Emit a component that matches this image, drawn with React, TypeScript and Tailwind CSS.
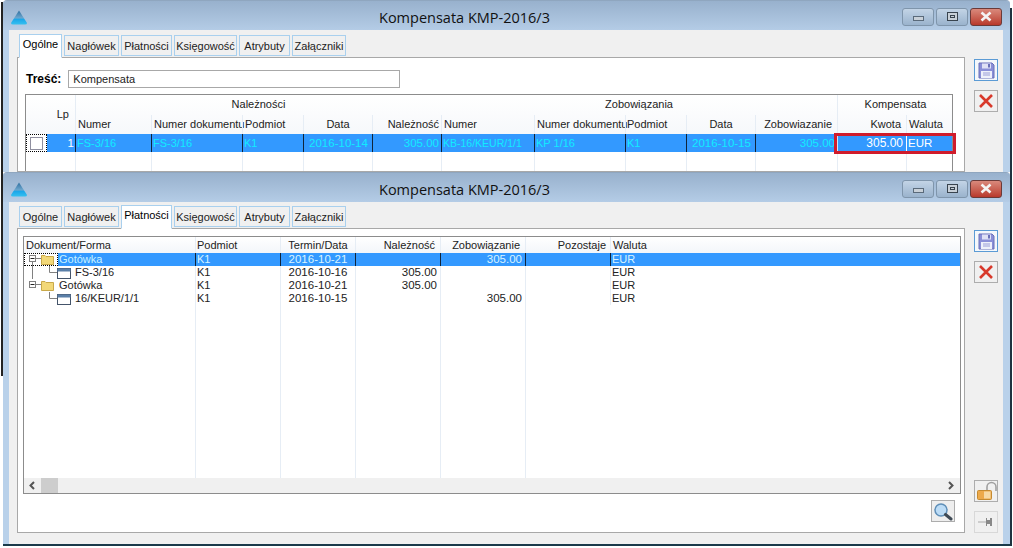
import React from "react";

const FONT = "font-['Liberation_Sans',Arial,sans-serif]";
const TITLE = "font-['Open_Sans','Noto_Sans',sans-serif]";

function Logo() {
  return (
    <svg width="16" height="15" viewBox="0 0 16 15" className="shrink-0 mt-[3px]">
      <defs>
        <linearGradient id="lg" x1="0" y1="0" x2="0" y2="1">
          <stop offset="0" stopColor="#2f6f9f" />
          <stop offset="0.55" stopColor="#6fa8cf" />
          <stop offset="0.6" stopColor="#19a4e8" />
          <stop offset="1" stopColor="#35c0f0" />
        </linearGradient>
      </defs>
      <path d="M8 0.5 L16 13 Q16 14.5 14 14.5 L2 14.5 Q0 14.5 0 13 Z" fill="url(#lg)" />
    </svg>
  );
}

function Chrome() {
  return (
    <div className="flex items-start gap-[2px] mt-[2px]">
      <div className="w-[32px] h-[18px] rounded-[3px] border border-[#7f95ab] bg-gradient-to-b from-[#c3d4e6] to-[#9ab3cd] flex items-center justify-center">
        <div className="w-[11px] h-[5px] mt-[3px] border border-[#5a6a7a] bg-[#c8d0d8]" />
      </div>
      <div className="w-[32px] h-[18px] rounded-[3px] border border-[#7f95ab] bg-gradient-to-b from-[#c3d4e6] to-[#9ab3cd] flex items-center justify-center">
        <div className="w-[11px] h-[9px] border border-[#39444f] bg-[#c8d0d8] flex items-center justify-center">
          <div className="w-[5px] h-[3px] border border-[#39444f]" />
        </div>
      </div>
      <div className="w-[32px] h-[18px] rounded-[3px] border border-[#6b3a38] bg-gradient-to-b from-[#d9897c] to-[#b8382c] flex items-center justify-center">
        <svg width="14" height="11" viewBox="0 0 14 11">
          <path d="M2.5 1.5 L11.5 9.5 M11.5 1.5 L2.5 9.5" stroke="#f4f4f4" strokeWidth="2.6" />
        </svg>
      </div>
    </div>
  );
}

function Tabs({ active }: { active: string }) {
  const tabs: [string, string][] = [
    ["Ogólne", "w-[43px]"],
    ["Nagłówek", "w-[55px]"],
    ["Płatności", "w-[51px]"],
    ["Księgowość", "w-[63px]"],
    ["Atrybuty", "w-[51px]"],
    ["Załączniki", "w-[54px]"],
  ];
  return (
    <div className="flex items-end gap-[2px] pl-[10px] h-[25px] relative z-10">
      {tabs.map(([t, w]) =>
        t === active ? (
          <div key={t} className={`${w} h-[24px] -mb-[1px] border border-[#a9d0ee] border-b-white bg-white text-black text-[11px] leading-[19px] text-center whitespace-nowrap`}>
            {t}
          </div>
        ) : (
          <div key={t} className={`${w} h-[21px] mb-[1px] border border-[#a9d0ee] bg-[#f0f0f0] text-[#222] text-[11px] leading-[20px] text-center whitespace-nowrap`}>
            {t}
          </div>
        )
      )}
    </div>
  );
}

function Save() {
  return (
    <div className="w-[24px] h-[22px] border border-[#5b9bd5] bg-[#f4f8fc] flex items-center justify-center">
      <svg width="17" height="17" viewBox="0 0 17 17">
        <path d="M1 1 H14 L16 3 V16 H1 Z" fill="#8a8fd8" stroke="#6a70b8" />
        <rect x="4" y="1.5" width="9" height="5" fill="#dfe1f5" />
        <rect x="10" y="2" width="2" height="3.5" fill="#6a70b8" />
        <rect x="3" y="9" width="11" height="7" fill="#eef0fa" />
        <path d="M5 11 H12 M5 13 H12" stroke="#9a9ed8" />
      </svg>
    </div>
  );
}

function Cancel() {
  return (
    <div className="w-[24px] h-[22px] border border-[#adadad] bg-[#f0f0f0] flex items-center justify-center">
      <svg width="16" height="16" viewBox="0 0 16 16">
        <path d="M2 2 L14 14 M14 2 L2 14" stroke="#d8392b" strokeWidth="2.6" />
      </svg>
    </div>
  );
}

function Window({ title, children, className }: { title: string; children: React.ReactNode; className: string }) {
  return (
    <div className={`${className} flex flex-col ml-[3px] mr-[3px] bg-[#b9d1ea] overflow-hidden rounded-t-[4px] border-t border-[#8fa6bf]`}>
      <div className="h-[29px] shrink-0 flex items-center bg-gradient-to-b from-[#98b1cd] to-[#b4cce6] pl-[8px] pr-[8px]">
        <Logo />
        <div className={`flex-1 text-center text-[14.5px] pt-[5px] text-[#111] ${TITLE}`}>{title}</div>
        <Chrome />
      </div>
      <div className="flex-1 min-h-0 ml-[6px] mr-[7px] bg-[#f0f0f0] flex flex-col">{children}</div>
    </div>
  );
}

const W1 = ["w-[49px]", "w-[76px]", "w-[91px]", "w-[61px]", "w-[69px]", "w-[69px]", "w-[93px]", "w-[91px]", "w-[61px]", "w-[69px]", "w-[82px]", "w-[69px]", "w-[47px]"];

function Row1() {
  const cells: [string, string][] = [
    ["FS-3/16", "text-left text-[11px]"],
    ["FS-3/16", "text-left text-[11px]"],
    ["K1", "text-left text-[11px]"],
    ["2016-10-14", "text-center text-[11.5px]"],
    ["305.00", "text-right pr-[2px] text-[11.5px]"],
    ["KB-16/KEUR/1/1", "text-left text-[10.5px]"],
    ["KP 1/16", "text-left text-[11px]"],
    ["K1", "text-left text-[11px]"],
    ["2016-10-15", "text-center text-[11.5px]"],
    ["305.00", "text-right pr-[2px] text-[11.5px]"],
  ];
  return (
    <div className="flex h-[18px] bg-[#3399ff] relative leading-[18px]">
      <div className={`${W1[0]} flex shrink-0`}>
        <div className="w-[21px] h-[18px] bg-white border border-dotted border-black flex items-center justify-center">
          <div className="w-[13px] h-[13px] border border-[#8f8f9f] bg-white" />
        </div>
        <div className="flex-1 pr-[1px] text-right text-white text-[11.5px]">1</div>
      </div>
      {cells.map(([t, align], i) => (
        <div key={i} className={`${W1[i + 1]} shrink-0 border-l border-[#10243a] pl-[1px] whitespace-nowrap text-[#10ecff] ${align}`}>
          {t}
        </div>
      ))}
      <div className={`${W1[11]} shrink-0 border-l border-[#cfe3f7] pr-[3px] text-right text-white text-[12px]`}>305.00</div>
      <div className={`${W1[12]} shrink-0 border-l border-white pl-[1px] text-white text-[11.5px]`}>EUR</div>
      <div className="absolute left-[808px] top-[-1px] w-[122px] h-[21px] border-[3px] border-[#d01c2c]" />
    </div>
  );
}

function Grid1() {
  const h2: [string, string][] = [
    ["Numer", "text-left pl-[2px]"],
    ["Numer dokumentu", "text-left pl-[2px]"],
    ["Podmiot", "text-left pl-[2px]"],
    ["Data", "text-center"],
    ["Należność", "text-right pr-[2px]"],
    ["Numer", "text-left pl-[2px]"],
    ["Numer dokumentu", "text-left pl-[2px]"],
    ["Podmiot", "text-left pl-[1px]"],
    ["Data", "text-center"],
    ["Zobowiazanie", "text-right pr-[5px]"],
    ["Kwota", "text-right pr-[5px]"],
    ["Waluta", "text-left pl-[2px]"],
  ];
  return (
    <div className="ml-[7px] mt-[6px] w-[928px] border-t border-l border-r border-[#8c8c8c] bg-white flex flex-col text-[11px] text-[#222] h-[100px] shrink-0">
      <div className="flex h-[39px] bg-gradient-to-b from-white to-[#f6f8fb]">
        <div className={`${W1[0]} shrink-0 text-right pr-[6px] pt-[11px]`}>Lp</div>
        <div className="flex-1 flex flex-col">
          <div className="flex h-[20px] leading-[19px] text-center">
            <div className="w-[366px] border-l border-[#e6edf5]">Należności</div>
            <div className="w-[396px]">Zobowiązania</div>
            <div className="w-[116px] border-l border-[#e6edf5]">Kompensata</div>
          </div>
          <div className="flex h-[19px] leading-[18px]">
            {h2.map(([t, a], i) => (
              <div key={i} className={`${W1[i + 1]} shrink-0 border-l border-[#e6edf5] whitespace-nowrap ${a}`}>
                {t}
              </div>
            ))}
          </div>
        </div>
      </div>
      <Row1 />
      <div className="flex flex-1">
        <div className={`${W1[0]} shrink-0`} />
        {W1.slice(1).map((w, i) => (
          <div key={i} className={`${w} shrink-0 border-l border-[#e6edf5]`} />
        ))}
      </div>
    </div>
  );
}

const W2 = ["w-[171px]", "w-[85px]", "w-[75px]", "w-[85px]", "w-[85px]", "w-[85px]", "flex-1"];

function Expander({ line, sel }: { line: boolean; sel?: boolean }) {
  return (
    <svg width="34" height="13" viewBox="0 0 34 13" className={`shrink-0 ${sel ? "bg-white outline-1 outline-dotted outline-offset-[-1px] outline-black" : ""}`}>
      {line && <path d="M8.5 9 V13" stroke="#808080" fill="none" />}
      <rect x="5.5" y="2.5" width="6" height="6" fill="#fff" stroke="#808080" />
      <path d="M6.5 5.5 H10.5" stroke="#222" fill="none" />
      <path d="M12 5.5 H17" stroke="#808080" fill="none" />
      <path d="M17.5 2.5 H21 L22 3.5 H29.5 V11.5 H17.5 Z" fill="#f2d878" stroke="#c9a94a" />
    </svg>
  );
}

function DocIcon({ line }: { line: boolean }) {
  return (
    <svg width="50" height="13" viewBox="0 0 50 13" className="shrink-0">
      {line && <path d="M8.5 0 V13" stroke="#808080" fill="none" />}
      <path d="M25.5 0 V6.5 H33" stroke="#808080" fill="none" />
      <rect x="33.5" y="2.5" width="13" height="10" fill="#fff" stroke="#44546a" />
      <rect x="33.5" y="2.5" width="13" height="3" fill="#5a7fa8" />
    </svg>
  );
}

function TreeRow({ name, doc, line, term, nal, zob, sel }: { name: string; doc: boolean; line: boolean; term: string; nal: string; zob: string; sel?: boolean }) {
  const c = sel ? "border-[#10243a] text-[#d8f4ff]" : "border-[#e6edf5] text-[#222]";
  return (
    <div className={`flex h-[13px] leading-[13px] text-[11px] ${sel ? "bg-[#3399ff]" : ""}`}>
      <div className={`${W2[0]} shrink-0 flex whitespace-nowrap ${sel ? "" : "text-[#222]"}`}>
        {doc ? <DocIcon line={line} /> : <Expander line={line} sel={sel} />}
        <span className={`pl-[1px] ${sel ? "text-[#c8f2ff]" : ""}`}>{name}</span>
      </div>
      <div className={`${W2[1]} shrink-0 pl-[1px] border-l ${c}`}>K1</div>
      <div className={`${W2[2]} shrink-0 text-center text-[11.5px] border-l ${c}`}>{term}</div>
      <div className={`${W2[3]} shrink-0 text-right pr-[3px] text-[11.5px] border-l ${c}`}>{nal}</div>
      <div className={`${W2[4]} shrink-0 text-right pr-[3px] text-[11.5px] border-l ${c}`}>{zob}</div>
      <div className={`${W2[5]} shrink-0 border-l ${c}`} />
      <div className={`${W2[6]} pl-[1px] border-l ${c}`}>EUR</div>
    </div>
  );
}

function Tree() {
  const h: [string, string][] = [
    ["Dokument/Forma", "text-left pl-[2px]"],
    ["Podmiot", "text-left pl-[1px]"],
    ["Termin/Data", "text-center"],
    ["Należność", "text-right pr-[5px]"],
    ["Zobowiązanie", "text-right pr-[5px]"],
    ["Pozostaje", "text-right pr-[4px]"],
    ["Waluta", "text-left pl-[2px]"],
  ];
  return (
    <div className="ml-[5px] mt-[7px] w-[938px] h-[258px] border border-[#8c8c8c] bg-white flex flex-col shrink-0">
      <div className="flex h-[16px] shrink-0 bg-gradient-to-b from-white to-[#f3f6fa] text-[11px] leading-[17px] text-[#222]">
        {h.map(([t, a], i) => (
          <div key={i} className={`${W2[i]} ${i < 6 ? "shrink-0" : ""} ${i > 0 ? "border-l border-[#e6edf5]" : ""} ${a}`}>
            {t}
          </div>
        ))}
      </div>
      <TreeRow name="Gotówka" doc={false} line={true} term="2016-10-21" nal="" zob="305.00" sel />
      <TreeRow name="FS-3/16" doc={true} line={true} term="2016-10-16" nal="305.00" zob="" />
      <TreeRow name="Gotówka" doc={false} line={false} term="2016-10-21" nal="305.00" zob="" />
      <TreeRow name="16/KEUR/1/1" doc={true} line={false} term="2016-10-15" nal="" zob="305.00" />
      <div className="flex-1 flex">
        {W2.map((w, i) => (
          <div key={i} className={`${w} ${i < 6 ? "shrink-0" : ""} ${i > 0 && i < 6 ? "border-l border-[#e6edf5]" : ""}`} />
        ))}
      </div>
      <div className="h-[15px] shrink-0 bg-[#f0f0f0] flex items-center justify-between">
        <div className="flex items-center">
          <svg width="17" height="15" viewBox="0 0 17 15">
            <path d="M10 4 L6.5 7.5 L10 11" fill="none" stroke="#555" strokeWidth="2" />
          </svg>
          <div className="w-[17px] h-[15px] bg-[#cdcdcd]" />
        </div>
        <svg width="17" height="15" viewBox="0 0 17 15" className="mr-[1px]">
          <path d="M7 4 L10.5 7.5 L7 11" fill="none" stroke="#555" strokeWidth="2" />
        </svg>
      </div>
    </div>
  );
}

function Lock() {
  return (
    <div className="w-[24px] h-[22px] border border-[#adadad] bg-[#f0f0f0] flex items-center justify-center">
      <svg width="21" height="20" viewBox="0 0 21 20">
        <path d="M11 10 V6 A4.5 4.5 0 0 1 20 6 V10" fill="none" stroke="#a0a0a0" strokeWidth="1.6" />
        <rect x="1.5" y="9.5" width="14" height="9" rx="1" fill="#eda94a" stroke="#c58a30" />
        <rect x="8" y="10.5" width="6.5" height="7" fill="#f7d9a4" />
      </svg>
    </div>
  );
}

function Pin() {
  return (
    <div className="w-[24px] h-[22px] border border-[#d8d8d8] bg-[#f0f0f0] flex items-center justify-center">
      <svg width="18" height="12" viewBox="0 0 18 12">
        <path d="M1 6 H9" stroke="#aaa" fill="none" />
        <path d="M9 2 H10 V4 H13 V2 H15 V10 H13 V8 H10 V10 H9 Z" fill="#888" />
      </svg>
    </div>
  );
}

function Search() {
  return (
    <div className="w-[24px] h-[22px] border border-[#adadad] bg-[#eee] flex items-center justify-center">
      <svg width="20" height="19" viewBox="0 0 20 19">
        <circle cx="8" cy="8" r="6" fill="#bcdcf6" stroke="#5f8fb8" strokeWidth="1.5" />
        <path d="M12.5 12.5 L18 17" stroke="#3f4a55" strokeWidth="3" strokeLinecap="round" />
      </svg>
    </div>
  );
}

export default function App() {
  return (
    <div className={`w-[1013px] h-[548px] overflow-hidden bg-white flex flex-col relative ${FONT}`}>
      <Window title="Kompensata KMP-2016/3" className="h-[172px] shrink-0">
        <div className="flex flex-1 min-h-0">
          <div className="w-[960px] shrink-0 flex flex-col min-h-0">
            <div className="h-[2px] shrink-0" />
            <Tabs active="Ogólne" />
            <div className="ml-[8px] w-[948px] flex-1 border border-[#a8a8a8] bg-white flex flex-col min-h-0 overflow-hidden">
              <div className="flex items-center h-[18px] mt-[12px] pl-[8px] shrink-0">
                <span className="text-[12px] font-bold text-black">Treść:</span>
                <div className="ml-[7px] w-[332px] h-[18px] border border-[#a8a8a8] text-[11px] leading-[16px] pl-[4px] text-[#222]">Kompensata</div>
              </div>
              <Grid1 />
            </div>
          </div>
          <div className="flex-1 flex flex-col items-center gap-[9px] pt-[29px]">
            <Save />
            <Cancel />
          </div>
        </div>
      </Window>
      <Window title="Kompensata KMP-2016/3" className="h-[374px] shrink-0 border-b-2 border-b-[#1a3a4a]">
        <div className="flex flex-1 min-h-0 mb-[6px]">
          <div className="w-[960px] shrink-0 flex flex-col">
            <div className="h-[1px] shrink-0" />
            <Tabs active="Płatności" />
            <div className="ml-[8px] w-[948px] h-[305px] border border-[#a8a8a8] bg-white flex flex-col">
              <Tree />
              <div className="mt-[6px] self-end mr-[9px]">
                <Search />
              </div>
            </div>
          </div>
          <div className="flex-1 flex flex-col items-center pt-[28px]">
            <Save />
            <div className="mt-[9px]"><Cancel /></div>
            <div className="flex-1" />
            <Lock />
            <div className="mt-[9px] mb-[5px]"><Pin /></div>
          </div>
        </div>
      </Window>
      <div className="absolute left-[1px] top-[2px] w-[2px] h-[374px] bg-[#222]" />
      <div className="absolute left-[1010px] top-[8px] w-[2px] h-[538px] bg-[#1f3340]" />
    </div>
  );
}
